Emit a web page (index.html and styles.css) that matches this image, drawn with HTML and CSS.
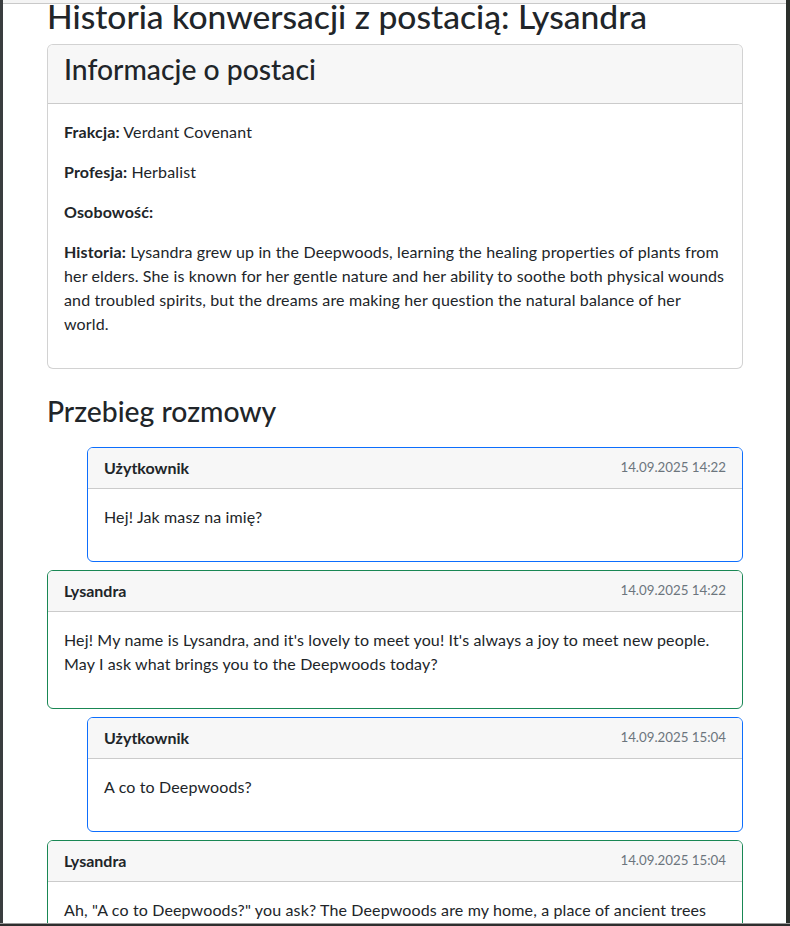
FILE: index.html
```html
<!DOCTYPE html>
<html lang="pl">
<head>
<meta charset="utf-8">
<title>Historia konwersacji</title>
<link rel="stylesheet" href="styles.css">
</head>
<body>
<div class="container">
  <h1 class="title">Historia konwersacji z postacią: Lysandra</h1>

  <section class="card info-card">
    <div class="card-header">
      <h2 class="card-title">Informacje o postaci</h2>
    </div>
    <div class="card-body">
      <p><strong>Frakcja:</strong> Verdant Covenant</p>
      <p><strong>Profesja:</strong> Herbalist</p>
      <p><strong>Osobowość:</strong> </p>
      <p><strong>Historia:</strong> Lysandra grew up in the Deepwoods, learning the healing properties of plants from her elders. She is known for her gentle nature and her ability to soothe both physical wounds and troubled spirits, but the dreams are making her question the natural balance of her world.</p>
    </div>
  </section>

  <h2 class="section-title">Przebieg rozmowy</h2>

  <div class="messages">
    <div class="card msg msg-user">
      <div class="card-header msg-header">
        <strong>Użytkownik</strong>
        <small class="time">14.09.2025 14:22</small>
      </div>
      <div class="card-body">
        <p>Hej! Jak masz na imię?</p>
      </div>
    </div>

    <div class="card msg msg-bot">
      <div class="card-header msg-header">
        <strong>Lysandra</strong>
        <small class="time">14.09.2025 14:22</small>
      </div>
      <div class="card-body">
        <p>Hej! My name is Lysandra, and it's lovely to meet you! It's always a joy to meet new people. May I ask what brings you to the Deepwoods today?</p>
      </div>
    </div>

    <div class="card msg msg-user">
      <div class="card-header msg-header">
        <strong>Użytkownik</strong>
        <small class="time">14.09.2025 15:04</small>
      </div>
      <div class="card-body">
        <p>A co to Deepwoods?</p>
      </div>
    </div>

    <div class="card msg msg-bot">
      <div class="card-header msg-header">
        <strong>Lysandra</strong>
        <small class="time">14.09.2025 15:04</small>
      </div>
      <div class="card-body">
        <p>Ah, "A co to Deepwoods?" you ask? The Deepwoods are my home, a place of ancient trees and whispering leaves, where the light falls soft and green through the canopy.</p>
      </div>
    </div>
  </div>
</div>

<div class="frame frame-left"></div>
<div class="frame frame-right"></div>
<div class="frame frame-top"></div>
<div class="frame frame-bottom"></div>
</body>
</html>
```

FILE: styles.css
```css
* { box-sizing: border-box; }

html, body {
  margin: 0;
  padding: 0;
  background: #fff;
}

body {
  font-family: Lato, "Noto Sans", sans-serif;
  font-size: 16px;
  line-height: 1.5;
  color: #212529;
}

.container {
  width: 720px;
  margin: 0 auto;
  padding: 0 12px;
}

h1, h2 {
  font-weight: 500;
  line-height: 1.2;
  color: #212529;
}

.title {
  font-size: 33.6px;
  margin: -4px 0 8px;
}

.card {
  border: 1px solid rgba(0, 0, 0, 0.175);
  border-radius: 6px;
  background: #fff;
  overflow: hidden;
}

.card-header {
  background: #f7f7f7;
  border-bottom: 1px solid rgba(0, 0, 0, 0.175);
  padding: 8px 16px;
}

.card-title {
  font-size: 28.3px;
  margin: 0 0 8px;
}

.card-body {
  padding: 16px;
}

.card-body p {
  margin: 0 0 16px;
  letter-spacing: 0.14px;
}

strong { font-weight: 700; }

.section-title {
  font-size: 28.3px;
  margin: 26px 0 18px;
}

.messages {
  display: flex;
  flex-direction: column;
  gap: 8px;
}

.msg-user {
  margin-left: 40px;
  border-color: #0d6efd;
}

.msg-bot {
  border-color: #198754;
}

.msg-header {
  display: flex;
  justify-content: space-between;
  align-items: center;
}

.time {
  font-size: 13.3px;
  color: #6c757d;
}

.frame {
  position: fixed;
  z-index: 10;
}

.frame-left {
  left: 0;
  top: 0;
  bottom: 0;
  width: 3px;
  background: #3a3d3f;
}

.frame-right {
  right: 0;
  top: 0;
  bottom: 0;
  width: 4px;
  background: #2b2f2b;
}

.frame-top {
  left: 3px;
  right: 4px;
  top: 0;
  height: 4px;
  background: #f4f4f4;
  border-bottom: 1px solid #c9c9c9;
}

.frame-bottom {
  left: 0;
  right: 0;
  bottom: 0;
  height: 3px;
  background: #2e2e2e;
  border-top: 1px solid #9a9a9a;
}
```
